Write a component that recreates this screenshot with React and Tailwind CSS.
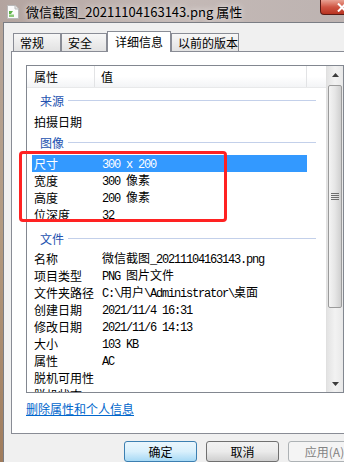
import { Fragment } from "react";

const rows = [
  { group: "来源", cls: "h-[25px]" },
  { label: "拍摄日期", value: "" },
  { group: "图像", cls: "h-[25px]" },
  { label: "尺寸", value: "300 x 200", selected: true },
  { label: "宽度", value: "300 像素" },
  { label: "高度", value: "200 像素" },
  { label: "位深度", value: "32" },
  { group: "文件", cls: "h-[27px] pt-[4px]" },
  { label: "名称", value: "微信截图_20211104163143.png" },
  { label: "项目类型", value: "PNG 图片文件" },
  { label: "文件夹路径", value: "C:\\用户\\Administrator\\桌面" },
  { label: "创建日期", value: "2021/11/4 16:31" },
  { label: "修改日期", value: "2021/11/6 14:13" },
  { label: "大小", value: "103 KB" },
  { label: "属性", value: "AC" },
  { label: "脱机可用性", value: "" },
  { label: "脱机状态", value: "" },
];

function Value({ text }) {
  const parts = text.match(/[\x00-\x7f]+|[^\x00-\x7f]+/g) || [];
  return parts.map((p, i) =>
    /^[\x00-\x7f]/.test(p) ? (
      <span key={i} className="font-['Liberation_Mono',monospace] text-[12px] tracking-[-1.2px]">
        {p}
      </span>
    ) : (
      <span key={i}>{p}</span>
    )
  );
}

function FileIcon() {
  return (
    <svg width="12" height="14" viewBox="0 0 12 14">
      <path d="M0.5 0.5 H8 L11.5 4 V13.5 H0.5 Z" fill="#fbfbfb" stroke="#b9b9b9" />
      <path d="M8 0.5 V4 H11.5" fill="#e6e6e6" stroke="#b9b9b9" />
      <path d="M2 6 H6 L4 9 H2 Z" fill="#5fb44a" />
      <rect x="2" y="9.5" width="5" height="2.5" fill="#8cc97a" />
    </svg>
  );
}

function Tab({ label, w, active }) {
  if (active) {
    return (
      <div className={`${w} h-[21px] -mb-px relative z-10 bg-white border border-b-0 border-[#898c95] flex items-center justify-center text-[12px]`}>
        {label}
      </div>
    );
  }
  return (
    <div className={`${w} h-[18px] bg-gradient-to-b from-[#f7f7f7] to-[#e2e2e2] border border-b-0 border-[#898c95] flex items-center pl-[6px] text-[12px]`}>
      {label}
    </div>
  );
}

function Scrollbar() {
  return (
    <div className="w-[17px] flex flex-col bg-gradient-to-r from-[#e3e3e3] via-[#f2f2f2] to-[#e8e8e8] border-l border-[#e0e0e0]">
      <div className="h-[18px] flex items-center justify-center">
        <svg width="7" height="4" viewBox="0 0 7 4">
          <path d="M0 4 L3.5 0 L7 4 Z" fill="#3c3c3c" />
        </svg>
      </div>
      <div className="h-[223px] mx-[1px] mt-px rounded-[2px] border border-[#9b9b9b] bg-gradient-to-r from-[#f4f4f4] via-[#e6e6e6] to-[#cfcfcf] flex items-center justify-center">
        <div className="flex flex-col gap-[1px]">
          <div className="w-[8px] h-px bg-[#6e6e6e]" />
          <div className="w-[8px] h-px bg-[#6e6e6e]" />
          <div className="w-[8px] h-px bg-[#6e6e6e]" />
          <div className="w-[8px] h-px bg-[#6e6e6e]" />
        </div>
      </div>
      <div className="flex-1" />
      <div className="h-[17px] flex items-center justify-center">
        <svg width="7" height="4" viewBox="0 0 7 4">
          <path d="M0 0 L3.5 4 L7 0 Z" fill="#3c3c3c" />
        </svg>
      </div>
    </div>
  );
}

function Button({ label, primary, disabled }) {
  const look = primary
    ? "border-[#3c7fb1] bg-gradient-to-b from-[#eaf6fd] via-[#d9f0fc] to-[#a7d9f5] text-black"
    : disabled
    ? "border-[#adb2b5] bg-[#f4f4f4] text-[#838383]"
    : "border-[#707070] bg-gradient-to-b from-[#f2f2f2] via-[#ebebeb] to-[#cfcfcf] text-black";
  return (
    <div className={`w-[73px] h-[21px] shrink-0 rounded-[3px] border flex items-center justify-center text-[12px] ${look}`}>
      {label}
    </div>
  );
}

export default function App() {
  return (
    <div className="w-[344px] h-[462px] overflow-hidden relative flex flex-col bg-gradient-to-b from-[#b6a69c] via-[#b39a80] to-[#a07c5c] font-['Noto_Sans_CJK_SC',sans-serif] text-[12px] text-black leading-none">
      <div className="h-[22px] shrink-0 flex items-center bg-gradient-to-r from-[#b3a49f] via-[#c4b9b6] to-[#bdb3b1]">
        <div className="ml-[7px] mt-[1px]">
          <FileIcon />
        </div>
        <div className="ml-[7px] text-[13px] text-black [text-shadow:0_0_6px_#ffffff]">
          微信截图_20211104163143.png 属性
        </div>
        <div className="ml-auto -mr-[19px] self-start w-[43px] h-[15px] rounded-bl-[4px] border border-t-0 border-[#5a1a14] bg-gradient-to-b from-[#e8a193] via-[#cf5443] to-[#b8321f] flex items-center justify-center">
          <svg width="10" height="9" viewBox="0 0 10 9">
            <path d="M1 0.5 L9 8.5 M9 0.5 L1 8.5" stroke="#ffffff" strokeWidth="2" />
          </svg>
        </div>
      </div>

      <div className="flex-1 ml-[3px] border-l border-t border-[#7a7d84] bg-[#f0f0f0] flex flex-col">
        <div className="pt-[8px] pl-[9px] flex items-end">
          <Tab label="常规" w="w-[48px]" />
          <Tab label="安全" w="w-[46px]" />
          <Tab label="详细信息" w="w-[64px]" active />
          <Tab label="以前的版本" w="w-[68px]" />
        </div>

        <div className="ml-[7px] w-[345px] h-[383px] shrink-0 bg-white border border-[#898c95] pt-[13px] pl-[14px] flex flex-col">
          <div className="w-[318px] h-[328px] border border-[#828790] flex">
            <div className="flex-1 overflow-hidden flex flex-col">
              <div className="h-[22px] shrink-0 flex bg-gradient-to-b from-white via-white to-[#f3f4f6] border-b border-[#e8e9ea]">
                <div className="w-[68px] border-r border-[#e2e3e5] flex items-center pl-[7px]">属性</div>
                <div className="w-[212px] border-r border-[#e2e3e5] flex items-center pl-[6px]">值</div>
                <div className="flex-1" />
              </div>
              {rows.map((r, i) =>
                r.group ? (
                  <div key={i} className={`${r.cls} shrink-0 flex items-center pl-[13px]`}>
                    <span className="text-[#2352b0]">{r.group}</span>
                    <div className="flex-1 h-px bg-[#c3d0ea] ml-[4px] mr-[10px]" />
                  </div>
                ) : (
                  <div
                    key={i}
                    className={`h-[17px] shrink-0 ml-[5px] w-[275px] flex items-center whitespace-pre ${r.selected ? "bg-[#3399ff] text-white" : ""}`}
                  >
                    <div className="w-[70px] pl-[2px]">{r.label}</div>
                    <div>
                      <Value text={r.value} />
                    </div>
                  </div>
                )
              )}
            </div>
            <Scrollbar />
          </div>
          <div className="mt-[10px] text-[#0066cc] underline">删除属性和个人信息</div>
        </div>

        <div className="mt-[7px] pl-[120px] flex gap-[9px]">
          <Button label="确定" primary />
          <Button label="取消" />
          <Button label="应用(A)" disabled />
        </div>
      </div>

      <div className="absolute left-[19px] top-[151px] w-[208px] h-[71px] border-[3px] border-[#ff2222] rounded-[4px] pointer-events-none" />
    </div>
  );
}
